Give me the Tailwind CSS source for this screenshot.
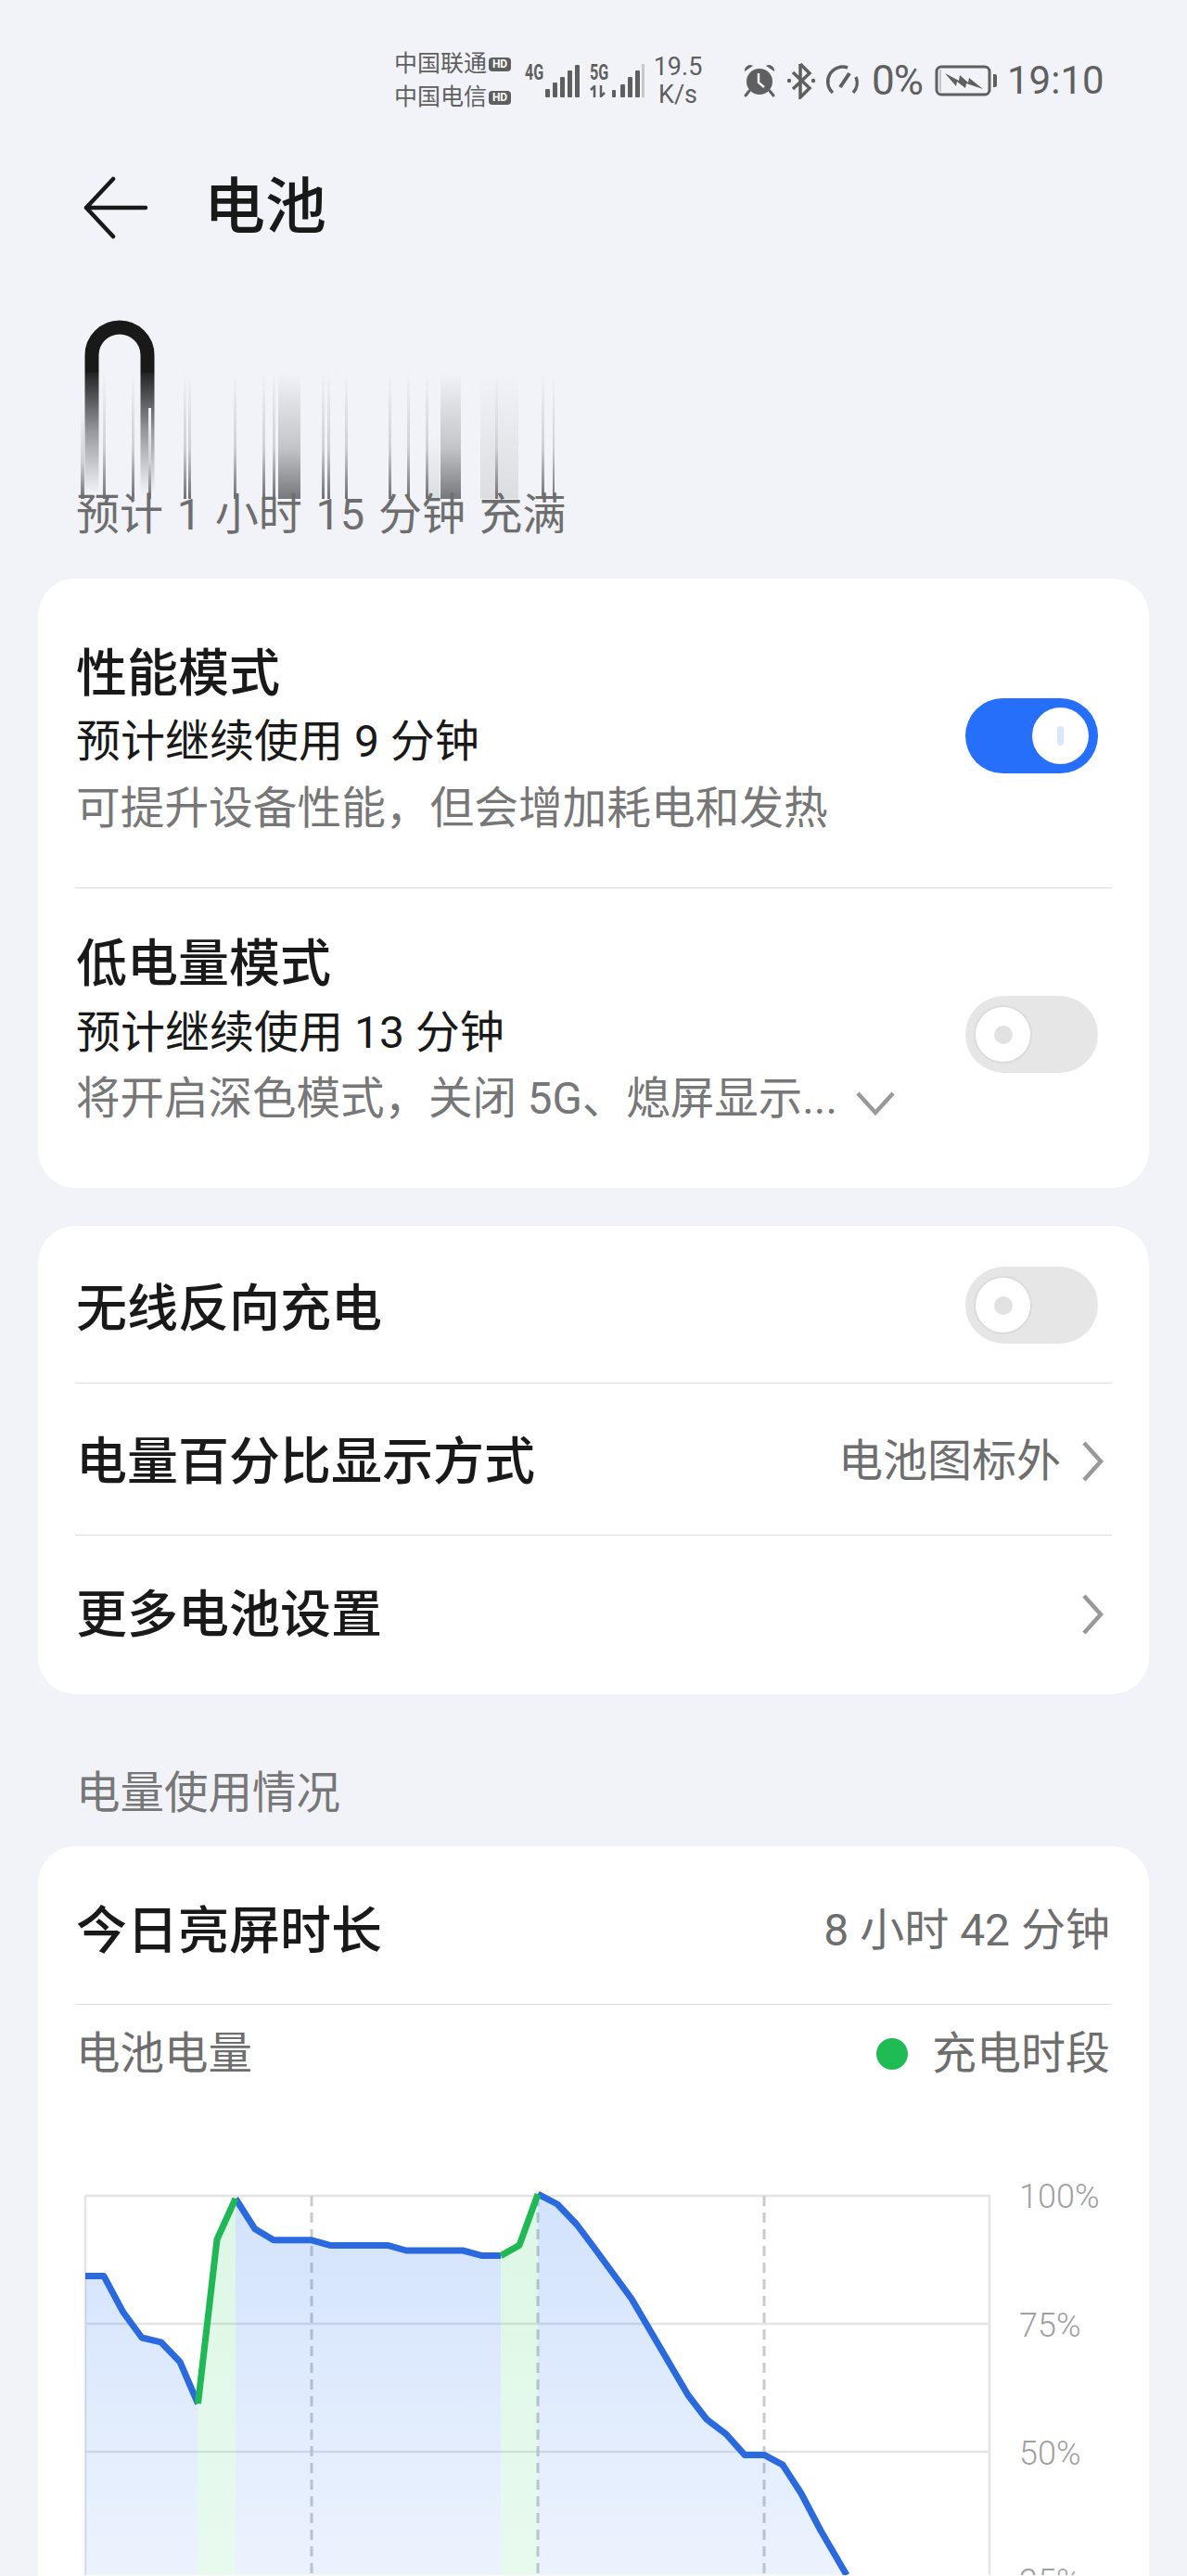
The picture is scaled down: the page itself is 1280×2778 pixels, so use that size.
<!DOCTYPE html>
<html lang="zh-CN">
  <head>
    <meta charset="UTF-8" />
    <meta name="viewport" content="width=device-width, initial-scale=1.0" />
    <title>电池</title>
    <script src="https://cdn.jsdelivr.net/npm/@tailwindcss/browser@4"></script>
  </head>
  <body class="bg-[#f1f3f8] font-['Roboto','Noto_Sans_CJK_SC',sans-serif] text-[#191919]">
    <div class="w-[1280px] h-[2778px] overflow-hidden">
      <!-- status bar -->
      <div class="h-[174px] flex items-center pl-[425px] text-[#5f5f5f]">
        <div class="w-[141px] flex flex-col gap-[10px] text-[25px] leading-[26px]">
          <div class="flex items-center gap-[2px]">
            <span class="whitespace-nowrap">中国联通</span>
            <span class="w-[24px] h-[15px] rounded-[4px] bg-[#5f5f5f] text-white text-[12px] leading-[15px] font-bold text-center">HD</span>
          </div>
          <div class="flex items-center gap-[2px]">
            <span class="whitespace-nowrap">中国电信</span>
            <span class="w-[24px] h-[15px] rounded-[4px] bg-[#5f5f5f] text-white text-[12px] leading-[15px] font-bold text-center">HD</span>
          </div>
        </div>
        <div class="flex items-start h-[36px] w-[141px] mt-[-1px]">
          <span class="text-[23px] leading-[20px] font-bold w-[22px] scale-x-[0.7] origin-left">4G</span>
          <svg class="w-[38px] h-[36px]" viewBox="0 0 38 36" fill="#5f5f5f">
            <rect x="0" y="27" width="5" height="9" rx="1" />
            <rect x="8" y="20" width="5" height="16" rx="1" />
            <rect x="16" y="14" width="5" height="22" rx="1" />
            <rect x="24" y="7" width="5" height="29" rx="1" />
            <rect x="32" y="1" width="5" height="35" rx="1" />
          </svg>
          <div class="ml-[10px] w-[22px] flex flex-col h-[36px] justify-between">
            <span class="text-[23px] leading-[20px] font-bold scale-x-[0.7] origin-left">5G</span>
            <svg class="w-[20px] h-[13px]" viewBox="0 0 20 13" fill="none" stroke="#5f5f5f" stroke-width="2.500">
              <path d="M5 13V1L1 5M12 0v12l4-4" />
            </svg>
          </div>
          <svg class="w-[38px] h-[36px]" viewBox="0 0 38 36" fill="#5f5f5f">
            <rect x="2" y="28" width="4" height="8" rx="1" />
            <rect x="11" y="22" width="5" height="14" rx="1" />
            <rect x="19" y="14" width="5" height="22" rx="1" />
            <rect x="27" y="7" width="5" height="29" rx="1" />
            <rect x="34" y="0" width="3" height="36" fill="#c8c8c8" />
          </svg>
        </div>
        <div class="w-[94px] text-[27px] leading-[30px] flex flex-col items-center -translate-x-[23px]">
          <span>19.5</span>
          <span>K/s</span>
        </div>
        <div class="flex items-center">
          <svg class="w-[36px] h-[38px]" viewBox="0 0 36 38">
            <circle cx="18" cy="20" r="14" fill="#5f5f5f" />
            <path d="M2 9a6 6 0 0 1 9-6zM34 9a6 6 0 0 0-9-6z" fill="#5f5f5f" />
            <path d="M7 30l-4 5M29 30l4 5" stroke="#5f5f5f" stroke-width="3" stroke-linecap="round" />
            <path d="M17 11v10l6 5" stroke="#f1f3f8" stroke-width="2.500" fill="none" />
          </svg>
          <svg class="w-[33px] h-[40px] ml-[11px]" viewBox="0 0 33 40" fill="none" stroke="#5f5f5f" stroke-width="3.500">
            <path d="M15 2v36l10-10L7 11M15 2l10 10L7 29" />
            <circle cx="3" cy="20" r="2.200" fill="#5f5f5f" stroke="none" />
            <circle cx="29" cy="20" r="2.200" fill="#5f5f5f" stroke="none" />
          </svg>
          <svg class="w-[38px] h-[36px] ml-[9px]" viewBox="0 0 38 36" fill="none" stroke="#5f5f5f" stroke-width="3.500">
            <path d="M24 4A16 16 0 0 0 8 31" />
            <path d="M33 14A16 16 0 0 1 30 31" />
            <path d="M26 10L16 25" stroke-width="4" />
          </svg>
          <span class="text-[44px] leading-[44px] ml-[12px] w-[57px] tracking-[-1px] whitespace-nowrap">0%</span>
          <svg class="w-[67px] h-[34px] ml-[11px]" viewBox="0 0 67 34" fill="none">
            <rect x="2" y="2" width="57" height="30" rx="5" stroke="#5f5f5f" stroke-width="3" />
            <rect x="5" y="5" width="2" height="24" fill="#c4c4c4" />
            <path d="M63 10h2a2 2 0 0 1 2 2v10a2 2 0 0 1-2 2h-2z" fill="#5f5f5f" />
            <path d="M11 9l15 8 1-6 9 8 1-5 15 12-18-6-1 5-9-7-1 5z" fill="#5f5f5f" />
          </svg>
          <span class="text-[42px] leading-[44px] ml-[11px] whitespace-nowrap">19:10</span>
        </div>
      </div>

      <!-- header -->
      <div class="h-[100px] flex items-center pl-[90px]">
        <svg class="w-[70px] h-[68px]" viewBox="0 0 70 68" fill="none" stroke="#191919" stroke-width="4.500" stroke-linecap="round" stroke-linejoin="round">
          <path d="M32 3L3 34l29 31M3 34h64" />
        </svg>
        <h1 class="ml-[60px] text-[66px] leading-[80px] font-medium">电池</h1>
      </div>

      <!-- smeared charge value -->
      <svg class="block w-[700px] h-[264px]" viewBox="0 274 700 264">
        <defs>
          <linearGradient id="fadeLine" x1="0" y1="0" x2="0" y2="1">
            <stop offset="0" stop-color="#f1f3f8" />
            <stop offset="0.6" stop-color="#cfd0d5" />
            <stop offset="1" stop-color="#6f7074" />
          </linearGradient>
          <linearGradient id="fadeBlock" x1="0" y1="0" x2="0" y2="1">
            <stop offset="0" stop-color="#f1f3f8" />
            <stop offset="0.6" stop-color="#c3c4c8" />
            <stop offset="1" stop-color="#77787c" />
          </linearGradient>
          <linearGradient id="fadeLight" x1="0" y1="0" x2="0" y2="1">
            <stop offset="0" stop-color="#f1f3f8" />
            <stop offset="1" stop-color="#dcdde1" />
          </linearGradient>
          <linearGradient id="fadeLeg" x1="0" y1="0" x2="0" y2="1">
            <stop offset="0" stop-color="#232426" />
            <stop offset="0.5" stop-color="#9a9b9f" />
            <stop offset="1" stop-color="#f1f3f8" />
          </linearGradient>
        </defs>
        <path d="M99 402v-19a30 30 0 0 1 60 0v19" fill="none" stroke="#191919" stroke-width="15" />
        <rect x="91.500" y="402" width="15" height="130" fill="url(#fadeLeg)" />
        <rect x="151.500" y="402" width="15" height="130" fill="url(#fadeLeg)" />
        <g fill="url(#fadeLine)">
          <rect x="87" y="440" width="4" height="98" />
          <rect x="111" y="402" width="3" height="136" />
          <rect x="142" y="402" width="3" height="136" />
          <rect x="160" y="440" width="3" height="98" />
          <rect x="198" y="402" width="3" height="136" />
          <rect x="203" y="402" width="3" height="136" />
          <rect x="252" y="402" width="3" height="136" />
          <rect x="283" y="402" width="3" height="136" />
          <rect x="294" y="402" width="3" height="136" />
          <rect x="347" y="402" width="3" height="136" />
          <rect x="353" y="402" width="3" height="136" />
          <rect x="372" y="402" width="3" height="136" />
          <rect x="419" y="402" width="3" height="136" />
          <rect x="439" y="402" width="3" height="136" />
          <rect x="459" y="402" width="3" height="136" />
          <rect x="584" y="402" width="3" height="136" />
          <rect x="596" y="402" width="2" height="136" />
        </g>
        <rect x="462" y="470" width="12" height="68" fill="url(#fadeLight)" />
        <rect x="518" y="402" width="41" height="136" fill="url(#fadeLight)" />
        <rect x="300" y="402" width="24" height="136" fill="url(#fadeBlock)" />
        <rect x="475" y="402" width="22" height="136" fill="url(#fadeBlock)" />
        <rect x="534" y="402" width="3" height="136" fill="url(#fadeLine)" />
      </svg>
      <p class="pl-[82px] h-[34px] mb-[52px] text-[47px] leading-[34px] text-[#6e6e6e] whitespace-nowrap [word-spacing:3px]">预计 1 小时 15 分钟 充满</p>

      <!-- modes -->
      <section class="mx-[41px] h-[657px] bg-white rounded-[40px] px-[40px]">
        <div class="h-[334px] pt-[61px] flex items-start justify-between border-b border-[#d8d8d8]">
          <div class="pl-[1px]">
            <h2 class="h-[76px] text-[55px] leading-[82px] font-medium">性能模式</h2>
            <p class="h-[78px] text-[48px] leading-[78px]">预计继续使用 9 分钟</p>
            <p class="h-[64px] text-[47.700px] leading-[66px] text-[#777]">可提升设备性能，但会增加耗电和发热</p>
          </div>
          <div class="mt-[68px] mr-[15px] w-[143px] h-[81px] rounded-full bg-[#256ffa] flex items-center justify-end pr-[10px]">
            <div class="w-[61px] h-[61px] rounded-full bg-white flex items-center justify-center">
              <div class="w-[7px] h-[21px] rounded-full bg-[#dbe6fb]"></div>
            </div>
          </div>
        </div>
        <div class="pt-[41px] flex items-start justify-between">
          <div class="pl-[1px]">
            <h2 class="h-[76px] text-[55px] leading-[80px] font-medium">低电量模式</h2>
            <p class="h-[78px] text-[48px] leading-[78px]">预计继续使用 13 分钟</p>
            <div class="h-[64px] flex items-center">
              <p class="w-[816px] text-[47.500px] leading-[64px] text-[#777] whitespace-nowrap">将开启深色模式，关闭 5G、熄屏显示...</p>
              <svg class="ml-[25px] w-[42px] h-[28px] mt-[10px]" viewBox="0 0 42 28" fill="none" stroke="#999" stroke-width="4.500">
                <path d="M2 3l19 21L40 3" />
              </svg>
            </div>
          </div>
          <div class="mt-[75px] mr-[15px] w-[143px] h-[83px] rounded-full bg-[#e6e6e6] flex items-center pl-[9px]">
            <div class="w-[63px] h-[63px] rounded-full bg-white border-2 border-[#dcdcdc] flex items-center justify-center">
              <div class="w-[20px] h-[20px] rounded-full bg-[#e2e2e2]"></div>
            </div>
          </div>
        </div>
      </section>

      <!-- settings -->
      <section class="mx-[41px] mt-[41px] h-[505px] bg-white rounded-[40px] px-[40px]">
        <div class="h-[170px] flex items-center justify-between border-b border-[#dcdcdc] pl-[1px]">
          <span class="text-[55px] font-medium leading-[70px] pt-[8px]">无线反向充电</span>
          <div class="mr-[15px] mt-[2px] w-[143px] h-[83px] rounded-full bg-[#e6e6e6] flex items-center pl-[9px]">
            <div class="w-[63px] h-[63px] rounded-full bg-white border-2 border-[#dcdcdc] flex items-center justify-center">
              <div class="w-[20px] h-[20px] rounded-full bg-[#e2e2e2]"></div>
            </div>
          </div>
        </div>
        <div class="h-[164px] flex items-center justify-between border-b border-[#dcdcdc] pl-[1px] pt-[4px]">
          <span class="text-[55px] font-medium leading-[70px]">电量百分比显示方式</span>
          <div class="flex items-center">
            <span class="text-[48px] leading-[64px] text-[#6e6e6e]">电池图标外</span>
            <svg class="ml-[22px] mr-[9px] w-[24px] h-[44px]" viewBox="0 0 24 44" fill="none" stroke="#999" stroke-width="4.500">
              <path d="M3 2l18 20L3 42" />
            </svg>
          </div>
        </div>
        <div class="h-[170px] flex items-center justify-between pl-[1px]">
          <span class="text-[55px] font-medium leading-[70px]">更多电池设置</span>
          <svg class="mr-[9px] w-[24px] h-[44px]" viewBox="0 0 24 44" fill="none" stroke="#999" stroke-width="4.500">
            <path d="M3 2l18 20L3 42" />
          </svg>
        </div>
      </section>

      <h3 class="pl-[82px] h-[164px] pt-[75px] text-[47.500px] leading-[64px] text-[#777]">电量使用情况</h3>

      <!-- usage -->
      <section class="mx-[41px] h-[900px] bg-white rounded-t-[40px] px-[40px]">
        <div class="h-[171px] flex items-center justify-between border-b border-[#dcdcdc] pl-[1px] pt-[11px]">
          <span class="text-[55px] font-medium leading-[70px]">今日亮屏时长</span>
          <span class="text-[48px] leading-[64px] text-[#6e6e6e] pr-[2px]">8 小时 42 分钟</span>
        </div>
        <div class="h-[101px] flex items-center justify-between pt-[4px]">
          <span class="pl-[1px] text-[47.500px] leading-[64px] text-[#6e6e6e]">电池电量</span>
          <div class="flex items-center pr-[2px]">
            <span class="w-[34px] h-[34px] rounded-full bg-[#1fbb55]"></span>
            <span class="ml-[26px] text-[48px] leading-[64px] text-[#6e6e6e]">充电时段</span>
          </div>
        </div>
        <svg class="block -mx-[40px] w-[1198px] h-[514px]" viewBox="41 2264 1198 514">
          <defs>
            <linearGradient id="areaBlue" gradientUnits="userSpaceOnUse" x1="0" y1="2369" x2="0" y2="2880">
              <stop offset="0" stop-color="#2a78f0" stop-opacity="0.21" />
              <stop offset="1" stop-color="#2a78f0" stop-opacity="0.06" />
            </linearGradient>
            <linearGradient id="areaGreen" gradientUnits="userSpaceOnUse" x1="0" y1="2369" x2="0" y2="2880">
              <stop offset="0" stop-color="#35d06a" stop-opacity="0.17" />
              <stop offset="1" stop-color="#35d06a" stop-opacity="0.1" />
            </linearGradient>
          </defs>
          <path d="M92 2369H1067V2778M92 2369V2778" fill="none" stroke="#e4e4e4" stroke-width="2.500" />
          <path d="M92 2507H1067M92 2645H1067" fill="none" stroke="#e4e4e4" stroke-width="2.500" />
          <path d="M336 2369V2778M580 2369V2778M824 2369V2778" fill="none" stroke="#c8cacf" stroke-width="3" stroke-dasharray="11 7" />
          <path d="M92 2455.600L112 2455.600L133 2494.800L153 2522L173.500 2526.800L194 2548L213.500 2593.200V2778H92Z" fill="url(#areaBlue)" />
          <path d="M254 2372L275 2404.800L295 2416.800L336 2416.800L356 2422.400L418 2422.400L438 2428L499 2428L520 2433.600L540 2433.600V2778H254Z" fill="url(#areaBlue)" />
          <path d="M580 2367.200L601 2378L622 2400L640 2424L681 2480L742 2584L762 2610L783 2626L803 2648.400L824 2648.400L844 2659.200L864 2690L885 2730L913 2778H580Z" fill="url(#areaBlue)" />
          <path d="M213.500 2593.200L234 2416L254 2372V2778H213.500Z" fill="url(#areaGreen)" />
          <path d="M540 2433.600L560 2422.400L580 2367.200V2778H540Z" fill="url(#areaGreen)" />
          <path d="M92 2455.600L112 2455.600L133 2494.800L153 2522L173.500 2526.800L194 2548L213.500 2593.200" fill="none" stroke="#2a6ade" stroke-width="7" stroke-linejoin="round" />
          <path d="M254 2372L275 2404.800L295 2416.800L336 2416.800L356 2422.400L418 2422.400L438 2428L499 2428L520 2433.600L540 2433.600" fill="none" stroke="#2a6ade" stroke-width="7" stroke-linejoin="round" />
          <path d="M580 2367.200L601 2378L622 2400L640 2424L681 2480L742 2584L762 2610L783 2626L803 2648.400L824 2648.400L844 2659.200L864 2690L885 2730L913 2778" fill="none" stroke="#2a6ade" stroke-width="7" stroke-linejoin="round" />
          <path d="M213.500 2593.200L234 2416L254 2372" fill="none" stroke="#1fb855" stroke-width="7" stroke-linejoin="round" />
          <path d="M540 2433.600L560 2422.400L580 2367.200" fill="none" stroke="#1fb855" stroke-width="7" stroke-linejoin="round" />
          <g fill="#a0a0a0" font-size="36" font-weight="300" font-family="Roboto, sans-serif">
            <text x="1099" y="2382">100%</text>
            <text x="1099" y="2521">75%</text>
            <text x="1099" y="2659">50%</text>
            <text x="1099" y="2797">25%</text>
          </g>
        </svg>
      </section>
    </div>
  </body>
</html>
